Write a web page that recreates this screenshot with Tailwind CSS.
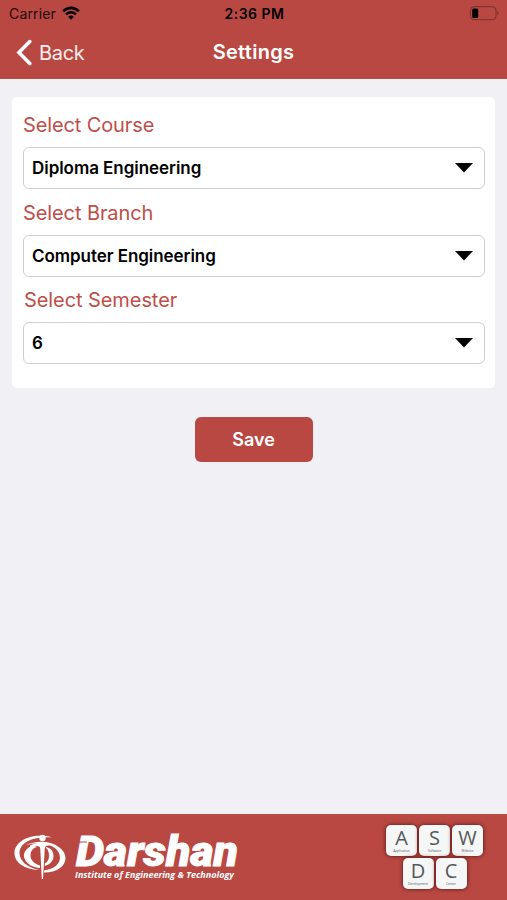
<!DOCTYPE html>
<html lang="en">
<head>
<meta charset="utf-8">
<title>Settings</title>
<script src="https://cdn.jsdelivr.net/npm/@tailwindcss/browser@4"></script>
</head>
<body class="w-[507px] h-[900px] overflow-hidden flex flex-col bg-[#f0f0f5] font-[Inter,sans-serif] text-black">
<header class="h-[79px] shrink-0 bg-[#b94842]">
  <div class="h-[28px] grid grid-cols-3 items-center pl-[9px] pr-[7px] text-[14px] leading-[28px]">
    <div class="flex items-center gap-[6px]">
      <span class="tracking-[0.15px] text-[#210b0a]">Carrier</span>
      <svg class="w-[18px] h-[14px] mb-[2px]" viewBox="0 0 19 14" fill="none" stroke="#000" stroke-width="2.6"><path d="M1.2 5.2Q9.5-2 17.8 5.2M4.2 8.5Q9.5 4.1 14.8 8.5"/><path d="M6.5 10.9Q9.5 8.3 12.5 10.9L9.5 14Z" fill="#000" stroke="none"/></svg>
    </div>
    <div class="text-center font-semibold tracking-[0.5px] whitespace-nowrap">2:36 PM</div>
    <svg class="w-[31px] h-[15px] justify-self-end mb-[1px]" viewBox="0 0 31 15"><rect x="1.5" y=".7" width="25.5" height="13" rx="3.5" fill="none" stroke="#7b302c"/><rect x="3.2" y="2.5" width="6" height="9.5" rx="1.6"/><path d="M28.3 4.8Q31 7.2 28.3 9.6Z" fill="#7b302c"/></svg>
  </div>
  <div class="h-[51px] grid grid-cols-3 items-center pl-[16px] pr-[16px] text-white text-[20px] leading-[24px]">
    <div class="flex items-center gap-[7px] pb-[2px]">
      <svg class="w-[16px] h-[27px]" viewBox="0 0 16 27" fill="none" stroke="#fff" stroke-width="3.6" stroke-linecap="round" stroke-linejoin="miter"><path d="M13.8 2.6L3 13.5L13.8 24.4"/></svg>
      <span class="tracking-[-0.3px] text-[#fbeeed]">Back</span>
    </div>
    <div class="text-center font-semibold tracking-[0.3px] pb-[3px]">Settings</div>
  </div>
</header>
<main class="flex-1 px-[12px] pt-[18px] flex flex-col items-center">
  <section class="w-[483px] h-[291px] bg-white rounded-[5px] px-[11px] pt-[13px] text-[#bd4e49] text-[20px] leading-[30px]">
    <label class="block h-[30px] tracking-[-0.12px]">Select Course</label>
    <div class="mt-[7px] w-[462px] h-[42px] border border-[#cfcfcf] rounded-[6px] pl-[8px] pr-[11px] flex items-center justify-between text-black text-[17px] font-semibold">
      <span class="tracking-[-0.05px]">Diploma Engineering</span>
      <svg class="w-[18px] h-[10px]" viewBox="0 0 18 10"><path d="M0 0H18L9 9.5Z"/></svg>
    </div>
    <label class="block h-[30px] mt-[9px] tracking-[-0.1px]">Select Branch</label>
    <div class="mt-[7px] w-[462px] h-[42px] border border-[#cfcfcf] rounded-[6px] pl-[8px] pr-[11px] flex items-center justify-between text-black text-[17px] font-semibold">
      <span class="tracking-[-0.05px]">Computer Engineering</span>
      <svg class="w-[18px] h-[10px]" viewBox="0 0 18 10"><path d="M0 0H18L9 9.5Z"/></svg>
    </div>
    <label class="block h-[30px] mt-[8px] pl-px tracking-[-0.08px]">Select Semester</label>
    <div class="mt-[7px] w-[462px] h-[42px] border border-[#cfcfcf] rounded-[6px] pl-[8px] pr-[11px] flex items-center justify-between text-black text-[17px] font-semibold">
      <span>6</span>
      <svg class="w-[18px] h-[10px]" viewBox="0 0 18 10"><path d="M0 0H18L9 9.5Z"/></svg>
    </div>
  </section>
  <button class="mt-[29px] w-[118px] h-[45px] rounded-[6px] bg-[#b94842] text-white text-[18px] font-semibold">Save</button>
</main>
<footer class="h-[86px] shrink-0 bg-[#b94842] flex justify-between pl-[12px] pr-[19px]">
  <svg class="w-[232px] h-[86px] overflow-visible" viewBox="12 814 232 86" fill="#fff">
    <circle cx="42.5" cy="838" r="3.2"/>
    <path d="M52 837.3C30 832 14.5 842 14.5 853C14.5 863 25 869.5 39 870C27 867 19.5 861 19.5 853C19.5 843 32 836 52 837.3Z"/>
    <path d="M25 845.5C44 836 65.5 846 65.5 858C65.5 867 55 873 44 872.5V870.5C54 869 60 864 60 857.5C60 846.5 43 839.5 25 845.5Z"/>
    <path d="M33 845.5C26 848 22.5 853 24.5 858.5C26.5 864 33 867.5 40 868V865.5C34 863.5 30.5 860 30.5 855.5C30.5 851 33 848 37 847Z"/>
    <path d="M30 845.5C38 841.5 47 841.5 56 845.5C49 845 45.2 845 44.8 848L43 879H41.8L40.2 848C39.5 845.5 35 845.5 30 847Z"/>
    <path d="M45.8 847C51 848 53.5 851 53.5 856C53.5 861 50 864.5 44.8 866V863.5C47.5 862 49 859.5 49 856C49 852 48 849 45.8 848Z"/>
    <text x="76" y="866" font-family="Roboto" font-size="42.5" font-weight="900" font-style="italic" textLength="162" lengthAdjust="spacingAndGlyphs" stroke="#fff" stroke-width=".9">Darshan</text>
    <path d="M79 842H87" stroke="#b94842" stroke-width="1"/>
    <text x="75" y="877.5" font-family="Open Sans" font-size="9.6" font-weight="700" font-style="italic" textLength="159" lengthAdjust="spacingAndGlyphs">Institute of Engineering &amp; Technology</text>
  </svg>
  <div class="pt-[11px] flex flex-col items-center gap-[2px] text-[#55595b] font-['Open_Sans',sans-serif]">
    <div class="flex gap-[2px] pr-[5px]">
      <div class="w-[31px] h-[31px] rounded-[5px] bg-[#f5f6f6] shadow-[0_0_4px_#541512] flex flex-col items-center"><b class="font-normal text-[20px] leading-[25px]">A</b><small class="text-[3.2px] leading-[2px]">Application</small></div>
      <div class="w-[31px] h-[31px] rounded-[5px] bg-[#f5f6f6] shadow-[0_0_4px_#541512] flex flex-col items-center"><b class="font-normal text-[20px] leading-[25px]">S</b><small class="text-[3.2px] leading-[2px]">Software</small></div>
      <div class="w-[31px] h-[31px] rounded-[5px] bg-[#f5f6f6] shadow-[0_0_4px_#541512] flex flex-col items-center"><b class="font-normal text-[20px] leading-[25px]">W</b><small class="text-[3.2px] leading-[2px]">Website</small></div>
    </div>
    <div class="flex gap-[2px] pr-[5px]">
      <div class="w-[31px] h-[31px] rounded-[5px] bg-[#f5f6f6] shadow-[0_0_4px_#541512] flex flex-col items-center"><b class="font-normal text-[20px] leading-[25px]">D</b><small class="text-[3.2px] leading-[2px]">Development</small></div>
      <div class="w-[31px] h-[31px] rounded-[5px] bg-[#f5f6f6] shadow-[0_0_4px_#541512] flex flex-col items-center"><b class="font-normal text-[20px] leading-[25px]">C</b><small class="text-[3.2px] leading-[2px]">Center</small></div>
    </div>
  </div>
</footer>
</body>
</html>
